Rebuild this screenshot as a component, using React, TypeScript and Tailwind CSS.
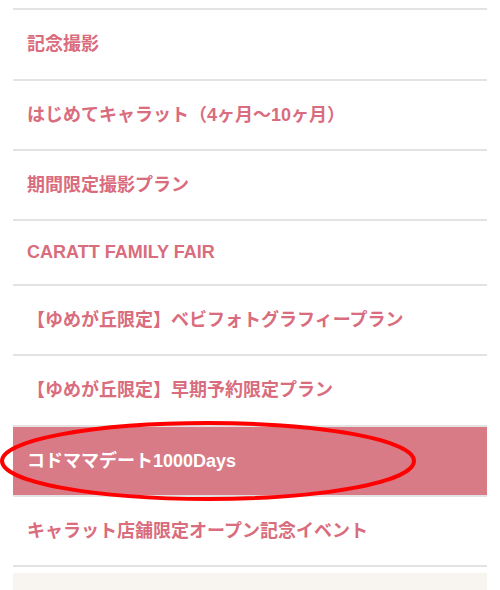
const items = [
    { label: '記念撮影', h: 'h-[69px]' },
    { label: 'はじめてキャラット（4ヶ月〜10ヶ月）', h: 'h-[68px]' },
    { label: '期間限定撮影プラン', h: 'h-[68px]' },
    { label: 'CARATT FAMILY FAIR', h: 'h-[63px]' },
    { label: '【ゆめが丘限定】ベビフォトグラフィープラン', h: 'h-[68px]' },
    { label: '【ゆめが丘限定】早期予約限定プラン', h: 'h-[69px]' },
    { label: 'コドママデート1000Days', h: 'h-[68px]', active: true },
    { label: 'キャラット店舗限定オープン記念イベント', h: 'h-[68px]' },
];

export default function App() {
    return (
        <div
            className="relative h-[590px] w-[500px] overflow-hidden bg-white pt-2"
            style={{ fontFamily: '"Liberation Sans", "Noto Sans CJK JP", sans-serif' }}
        >
            <ul className="mx-[13px]">
                {items.map((item) => (
                    <li key={item.label} className="border-t-2 border-[#e3e3e3]">
                        <div
                            className={
                                item.active
                                    ? `flex ${item.h} items-center bg-[#d97a87] pl-[14px] text-[18px] font-bold text-white`
                                    : `flex ${item.h} items-center pl-[14px] text-[18px] font-bold text-[#d96c7d]`
                            }
                        >
                            {item.label}
                        </div>
                    </li>
                ))}
                <li className="border-t-2 border-[#e3e3e3] pt-[6px]">
                    <div className="h-[40px] bg-[#f8f5f1]" />
                </li>
            </ul>
            {/* hand-drawn highlight ring over the active row */}
            <svg className="pointer-events-none absolute left-0 top-0" width="500" height="590">
                <ellipse cx="208" cy="461" rx="206" ry="38" fill="none" stroke="#ff0000" strokeWidth="4" />
            </svg>
        </div>
    );
}
